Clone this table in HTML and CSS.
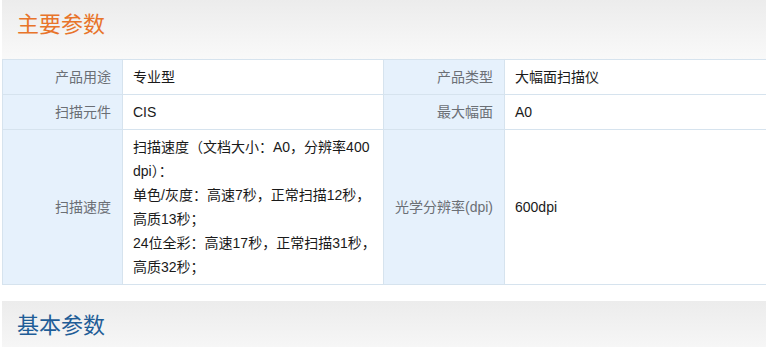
FILE: index.html
```html
<!DOCTYPE html>
<html lang="zh-CN">
<head>
<meta charset="utf-8">
<title>主要参数</title>
<link rel="stylesheet" href="styles.css">
</head>
<body>
<div class="page">
  <section class="block">
    <h2 class="block-title title-orange">主要参数</h2>
    <table class="params">
      <colgroup>
        <col class="c-label">
        <col class="c-value">
        <col class="c-label2">
        <col class="c-value2">
      </colgroup>
      <tr>
        <th>产品用途</th>
        <td>专业型</td>
        <th>产品类型</th>
        <td>大幅面扫描仪</td>
      </tr>
      <tr>
        <th>扫描元件</th>
        <td>CIS</td>
        <th>最大幅面</th>
        <td>A0</td>
      </tr>
      <tr>
        <th>扫描速度</th>
        <td>扫描速度（文档大小：A0，分辨率400 dpi）：<br>单色/灰度：高速7秒，正常扫描12秒，高质13秒；<br>24位全彩：高速17秒，正常扫描31秒，高质32秒；</td>
        <th>光学分辨率(dpi)</th>
        <td>600dpi</td>
      </tr>
    </table>
  </section>
  <section class="block block-second">
    <h2 class="block-title title-blue">基本参数</h2>
  </section>
</div>
</body>
</html>
```

FILE: styles.css
```css
html, body {
  margin: 0;
  padding: 0;
  background: #ffffff;
  overflow: hidden;
}
body {
  font-family: "Liberation Sans", Arial, "Noto Sans CJK SC", sans-serif;
  font-size: 14px;
}
.page {
  width: 770px;
  padding-left: 2px;
}
.block-title {
  margin: 0;
  height: 59px;
  padding-left: 15px;
  font-size: 22px;
  font-weight: normal;
  line-height: 45px;
  background: linear-gradient(to bottom, #ececec 0%, #f9f9f9 100%);
  font-family: "Noto Sans CJK SC", "Liberation Sans", sans-serif;
}
.title-orange {
  color: #e8742a;
}
.title-blue {
  color: #1f5d97;
}
.block-second {
  margin-top: 16px;
}
.params {
  width: 768px;
  border-collapse: collapse;
  table-layout: fixed;
}
.c-label { width: 120px; }
.c-value { width: 261px; }
.c-label2 { width: 121px; }
.params th,
.params td {
  border: 1px solid #d6e3ee;
  padding: 5px 10px;
  line-height: 24px;
  font-size: 14px;
  vertical-align: middle;
}
.params th {
  background: #e6f1fc;
  color: #6b6f75;
  font-weight: normal;
  text-align: right;
  padding-right: 11px;
}
.params td {
  color: #1a1a1a;
  text-align: left;
  padding-left: 10px;
  padding-right: 2px;
}
```
